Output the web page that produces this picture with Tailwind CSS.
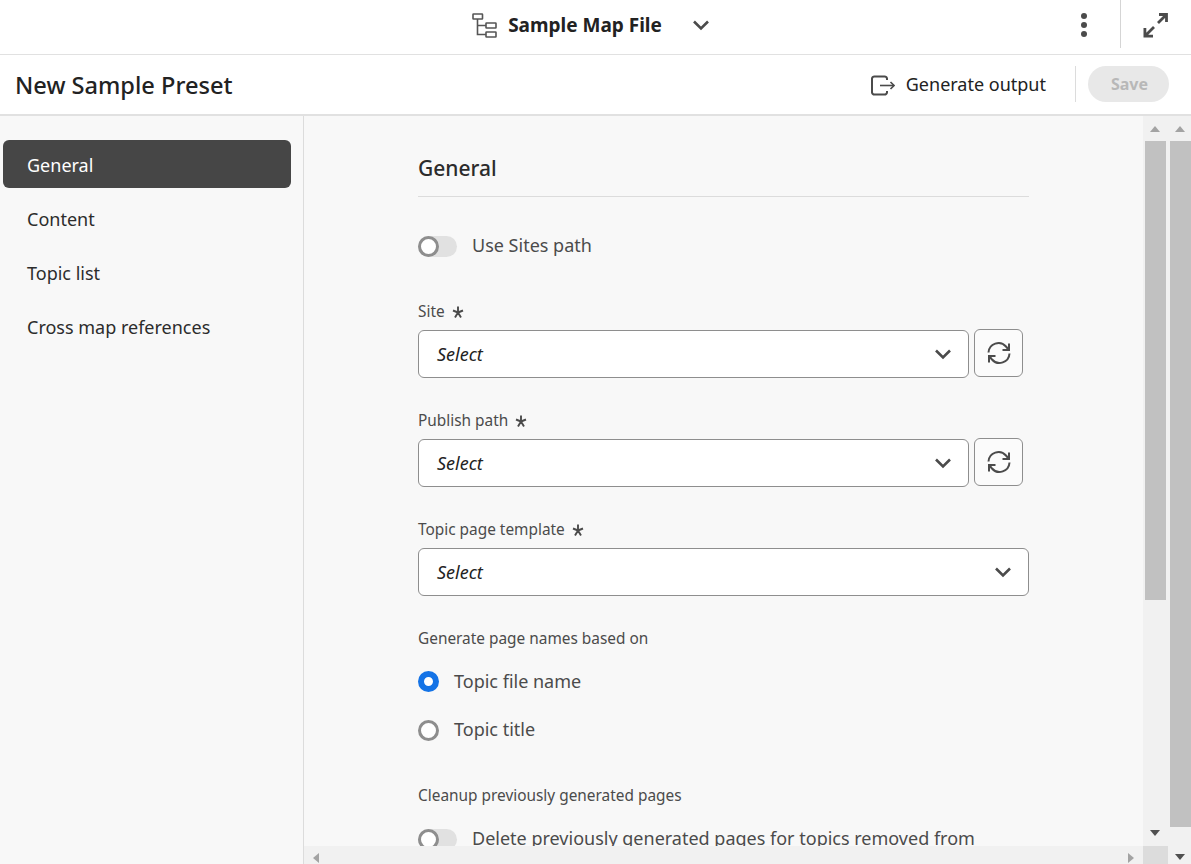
<!DOCTYPE html>
<html lang="en">
<head>
    <meta charset="UTF-8">
    <title>New Sample Preset</title>
    <script src="https://cdn.jsdelivr.net/npm/@tailwindcss/browser@4"></script>
</head>
<body class="font-['Noto_Sans',sans-serif] text-[#222] bg-white">
<div class="w-[1191px] h-[864px] overflow-hidden flex flex-col">
    <!-- map file bar -->
    <div class="h-[55px] shrink-0 border-b border-[#e1e1e1] flex items-center relative">
        <div class="flex-1 flex items-center justify-center pr-[10px] pb-[4px]">
            <svg class="w-[25px] h-[25px] text-[#555] mr-[11px]" viewBox="0 0 25 25" fill="none" stroke="currentColor" stroke-width="1.6">
                <rect x="1" y="1" width="9.500" height="5" rx=".5"/>
                <rect x="14" y="10" width="10" height="5" rx=".5"/>
                <rect x="14" y="19" width="10" height="5" rx=".5"/>
                <path d="M5.500 6v15.500H14M5.500 12.500H14"/>
            </svg>
            <span class="text-[19px] font-bold text-[#222] leading-none">Sample Map File</span>
            <svg class="w-[16px] h-[16px] ml-[31px] text-[#4b4b4b]" viewBox="0 0 16 16" fill="none" stroke="currentColor" stroke-width="2.6"><path d="M1 4.500l7 7 7-7"/></svg>
        </div>
        <div class="absolute left-[1081px] top-[13px] flex flex-col gap-[3px]">
            <span class="w-[6px] h-[6px] rounded-full bg-[#4b4b4b]"></span>
            <span class="w-[6px] h-[6px] rounded-full bg-[#4b4b4b]"></span>
            <span class="w-[6px] h-[6px] rounded-full bg-[#4b4b4b]"></span>
        </div>
        <div class="absolute left-[1120px] top-0 h-[48px] w-px bg-[#d5d5d5]"></div>
        <svg class="absolute left-[1143px] top-[12px] w-[26px] h-[26px] text-[#4b4b4b]" viewBox="0 0 26 26" fill="none" stroke="currentColor" stroke-width="2.800">
            <path d="M15 11l8-8M16 2.500h7.500V10M11 15l-8 8M1.900 16v8.100H10"/>
        </svg>
    </div>
    <!-- title bar -->
    <div class="h-[61px] shrink-0 border-b-2 border-[#e1e1e1] flex items-center pl-[15px] pr-[22px]">
        <h1 class="text-[23.600px] font-medium text-[#222] leading-none pt-[2px]">New Sample Preset</h1>
        <div class="ml-auto flex items-center">
            <svg class="w-[24px] h-[24px] text-[#4b4b4b] mr-[11px]" viewBox="0 0 24 24" fill="none" stroke="currentColor" stroke-width="2">
                <path d="M16 7V5.500A2.500 2.500 0 0 0 13.500 3.500H3.500A2.500 2.500 0 0 0 1 5.500v14A2.500 2.500 0 0 0 3.500 21.500h10a2.500 2.500 0 0 0 2.500-2V18"/>
                <path d="M9 12.500h14" stroke-width="1.600"/>
                <path d="M19.500 9l3.500 3.500-3.500 3.500" stroke-width="1.600"/>
            </svg>
            <span class="text-[18px] text-[#222]">Generate output</span>
            <div class="w-px h-[36px] bg-[#dcdcdc] ml-[29px] mr-[12px] -translate-y-[1px]"></div>
            <button class="w-[81px] h-[36px] rounded-full bg-[#e8e8e8] text-[#b8b8b8] text-[16px] font-bold -translate-y-[1px] pl-[2px]">Save</button>
        </div>
    </div>
    <!-- body -->
    <div class="flex-1 min-h-0 flex bg-[#f8f8f8]">
        <nav class="w-[304px] shrink-0 border-r border-[#dcdcdc] pt-[24px] pl-[3px] pr-[12px] text-[18px] text-[#2c2c2c]">
            <div class="h-[48px] rounded-[6px] bg-[#464646] text-white flex items-center pl-[24px] pt-[2px]">General</div>
            <div class="h-[48px] mt-[6px] flex items-center pl-[24px] pt-[2px]">Content</div>
            <div class="h-[48px] mt-[6px] flex items-center pl-[24px] pt-[2px]">Topic list</div>
            <div class="h-[48px] mt-[6px] flex items-center pl-[24px] pt-[2px]">Cross map references</div>
        </nav>
        <div class="w-[839px] shrink-0 flex flex-col">
            <main class="flex-1 min-h-0 overflow-hidden pl-[114px]">
                <div class="w-[611px]">
                    <h2 class="text-[21px] font-medium text-[#2c2c2c] leading-[28px] pt-[38px] pb-[14px] border-b border-[#dcdcdc]">General</h2>
                    <label class="flex items-center mt-[36px] h-[26px]">
                        <span class="w-[39px] h-[21px] rounded-full bg-[#e1e1e1] relative shrink-0">
                            <span class="absolute left-0 top-0 w-[21px] h-[21px] rounded-full border-[3px] border-[#8e8e8e] bg-white"></span>
                        </span>
                        <span class="ml-[15px] text-[18px] text-[#4b4b4b] pb-[2px]">Use Sites path</span>
                    </label>
                    <div class="mt-[41px] text-[15.400px] leading-[20px] pt-[2px] text-[#4b4b4b] flex items-center">Site <svg class="w-[12px] h-[12px] ml-[7px] text-[#4b4b4b]" viewBox="0 0 12 12" fill="none" stroke="currentColor" stroke-width="1.900"><path d="M6 .5v6M6 6.500L1 4.500M6 6.500l5-2M6 6.500l-3 5M6 6.500l3 5"/></svg></div>
                    <div class="flex items-center mt-[8px] gap-[5px]">
                        <div class="w-[551px] h-[48px] rounded-[6px] border border-[#8e8e8e] bg-white flex items-center justify-between pl-[18px] pr-[17px]">
                            <span class="italic text-[18px] text-[#222]">Select</span>
                            <svg class="w-[16px] h-[16px] text-[#4b4b4b]" viewBox="0 0 16 16" fill="none" stroke="currentColor" stroke-width="2.6"><path d="M1 4.500l7 7 7-7"/></svg>
                        </div>
                        <button class="w-[49px] h-[48px] rounded-[6px] border border-[#8e8e8e] bg-[#fbfbfb] flex items-center justify-center -translate-y-[1px]">
                            <svg class="w-[24px] h-[24px] text-[#4b4b4b]" viewBox="0 0 24 24" fill="none" stroke="currentColor" stroke-width="2"><path d="M1.500 11.500A10 10 0 0 1 19 5.500l2.500 3M22.500 12.500A10 10 0 0 1 5 18.500l-2.500-3"/><path d="M22 2.500v6.500h-6.500M2 21.500v-6.500h6.500"/></svg>
                        </button>
                    </div>
                    <div class="mt-[31px] text-[15.400px] leading-[20px] pt-[2px] text-[#4b4b4b] flex items-center">Publish path <svg class="w-[12px] h-[12px] ml-[7px] text-[#4b4b4b]" viewBox="0 0 12 12" fill="none" stroke="currentColor" stroke-width="1.900"><path d="M6 .5v6M6 6.500L1 4.500M6 6.500l5-2M6 6.500l-3 5M6 6.500l3 5"/></svg></div>
                    <div class="flex items-center mt-[8px] gap-[5px]">
                        <div class="w-[551px] h-[48px] rounded-[6px] border border-[#8e8e8e] bg-white flex items-center justify-between pl-[18px] pr-[17px]">
                            <span class="italic text-[18px] text-[#222]">Select</span>
                            <svg class="w-[16px] h-[16px] text-[#4b4b4b]" viewBox="0 0 16 16" fill="none" stroke="currentColor" stroke-width="2.6"><path d="M1 4.500l7 7 7-7"/></svg>
                        </div>
                        <button class="w-[49px] h-[48px] rounded-[6px] border border-[#8e8e8e] bg-[#fbfbfb] flex items-center justify-center -translate-y-[1px]">
                            <svg class="w-[24px] h-[24px] text-[#4b4b4b]" viewBox="0 0 24 24" fill="none" stroke="currentColor" stroke-width="2"><path d="M1.500 11.500A10 10 0 0 1 19 5.500l2.500 3M22.500 12.500A10 10 0 0 1 5 18.500l-2.500-3"/><path d="M22 2.500v6.500h-6.500M2 21.500v-6.500h6.500"/></svg>
                        </button>
                    </div>
                    <div class="mt-[31px] text-[15.400px] leading-[20px] pt-[2px] text-[#4b4b4b] flex items-center">Topic page template <svg class="w-[12px] h-[12px] ml-[7px] text-[#4b4b4b]" viewBox="0 0 12 12" fill="none" stroke="currentColor" stroke-width="1.900"><path d="M6 .5v6M6 6.500L1 4.500M6 6.500l5-2M6 6.500l-3 5M6 6.500l3 5"/></svg></div>
                    <div class="mt-[8px] w-[611px] h-[48px] rounded-[6px] border border-[#8e8e8e] bg-white flex items-center justify-between pl-[18px] pr-[17px]">
                        <span class="italic text-[18px] text-[#222]">Select</span>
                        <svg class="w-[16px] h-[16px] text-[#4b4b4b]" viewBox="0 0 16 16" fill="none" stroke="currentColor" stroke-width="2.6"><path d="M1 4.500l7 7 7-7"/></svg>
                    </div>
                    <div class="mt-[31px] text-[15.400px] leading-[20px] pt-[2px] text-[#4b4b4b]">Generate page names based on</div>
                    <label class="flex items-center mt-[19px] h-[26px]">
                        <span class="w-[21px] h-[21px] rounded-full border-[6.500px] border-[#1473e6] bg-white shrink-0"></span>
                        <span class="ml-[15px] text-[18px] text-[#4b4b4b]">Topic file name</span>
                    </label>
                    <label class="flex items-center mt-[23px] h-[26px]">
                        <span class="w-[21px] h-[21px] rounded-full border-[3px] border-[#8e8e8e] bg-white shrink-0"></span>
                        <span class="ml-[15px] text-[18px] text-[#4b4b4b] pb-[2px]">Topic title</span>
                    </label>
                    <div class="mt-[41px] text-[15.400px] leading-[20px] pt-[2px] text-[#4b4b4b]">Cleanup previously generated pages</div>
                    <label class="flex items-center mt-[20px] h-[26px]">
                        <span class="w-[39px] h-[21px] rounded-full bg-[#e1e1e1] relative shrink-0">
                            <span class="absolute left-0 top-0 w-[21px] h-[21px] rounded-full border-[3px] border-[#8e8e8e] bg-white"></span>
                        </span>
                        <span class="ml-[15px] text-[18px] text-[#4b4b4b] whitespace-nowrap pb-[2px]">Delete previously generated pages for topics removed from</span>
                    </label>
                </div>
            </main>
            <!-- horizontal scrollbar -->
            <div class="h-[18px] shrink-0 bg-[#f1f1f1] flex items-start justify-between pl-[9px] pr-[9px] pt-[7px]">
                <span class="w-0 h-0 border-y-[5.500px] border-y-transparent border-r-[6px] border-r-[#a3a3a3]"></span>
                <span class="w-0 h-0 border-y-[5.500px] border-y-transparent border-l-[6px] border-l-[#a3a3a3]"></span>
            </div>
        </div>
        <!-- inner vertical scrollbar -->
        <div class="w-[26px] shrink-0 bg-[#f1f1f1] flex flex-col">
            <div class="h-[25px] flex items-center justify-center"><span class="w-0 h-0 border-x-[5.500px] border-x-transparent border-b-[6px] border-b-[#a3a3a3] -translate-x-[1px]"></span></div>
            <div class="h-[459px] ml-[2px] w-[21px] bg-[#c1c1c1]"></div>
            <div class="flex-1 flex items-end justify-center pb-[28px]"><span class="w-0 h-0 border-x-[5.500px] border-x-transparent border-t-[6px] border-t-[#505050] -translate-x-[1px]"></span></div>
            <div class="h-[18px] w-[25px] bg-[#dcdcdc] -mt-[18px]"></div>
        </div>
        <!-- outer vertical scrollbar -->
        <div class="w-[22px] shrink-0 bg-[#f1f1f1] flex flex-col">
            <div class="h-[25px] flex items-center justify-center"><span class="w-0 h-0 border-x-[5.500px] border-x-transparent border-b-[6px] border-b-[#a3a3a3]"></span></div>
            <div class="h-[686px] ml-[1px] bg-[#c1c1c1]"></div>
            <div class="flex-1 flex items-end justify-center pb-[4px]"><span class="w-0 h-0 border-x-[5.500px] border-x-transparent border-t-[6px] border-t-[#505050]"></span></div>
        </div>
    </div>
</div>
</body>
</html>
